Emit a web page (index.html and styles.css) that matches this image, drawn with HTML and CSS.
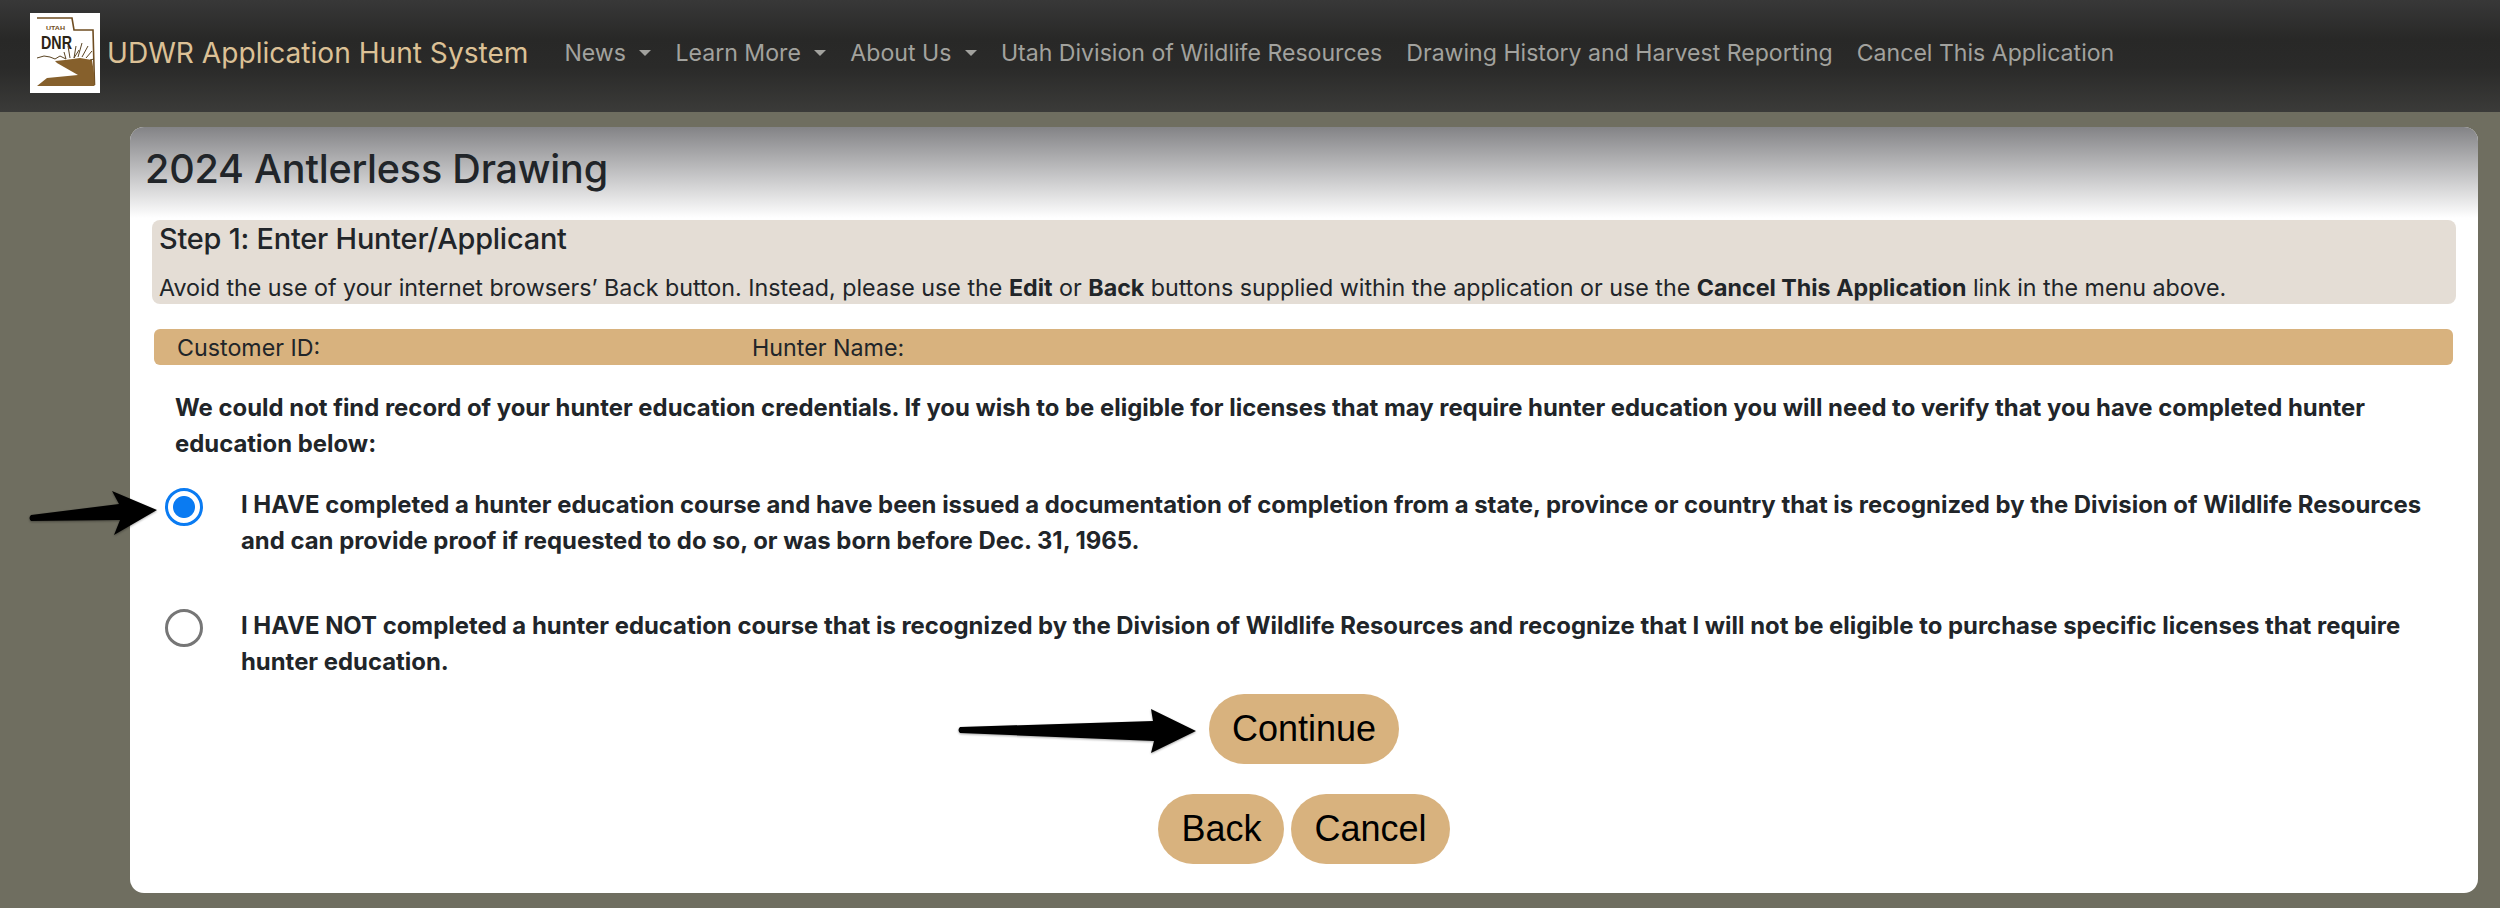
FILE: index.html
```html
<!DOCTYPE html>
<html lang="en">
<head>
<meta charset="utf-8">
<title>UDWR Application Hunt System</title>
<link rel="stylesheet" href="styles.css">
</head>
<body>
<nav class="navbar">
  <a class="logo" href="#">
    <svg viewBox="0 0 70 80" width="70" height="80" aria-hidden="true">
      <rect width="70" height="80" fill="#fff"/>
      <path d="M7 5H42L44 17H63L64.500 72" fill="none" stroke="#6f4d22" stroke-width="1.6"/>
      <path d="M7 73L17 65L48 62L27 50L25 48L35 47L50 45L62 47L64 60L64.500 73Z" fill="#86602c"/>
      <path d="M7 45L14 43L20 44L25 46L30 43L36 46M36 46L34 39M40 45L38 33M44 45L46 33M48 44L52 30M52 44L58 33M56 45L62 38M60 47L64 46M44 45L49 37" fill="none" stroke="#5a4423" stroke-width="1"/>
      <text class="logo-utah" x="16" y="17" textLength="19" lengthAdjust="spacingAndGlyphs">UTAH</text>
      <text class="logo-dnr" x="11" y="36" textLength="31" lengthAdjust="spacingAndGlyphs">DNR</text>
    </svg>
  </a>
  <a class="brand" href="#">UDWR Application Hunt System</a>
  <ul class="menu">
    <li class="dropdown">News</li>
    <li class="dropdown">Learn More</li>
    <li class="dropdown">About Us</li>
    <li>Utah Division of Wildlife Resources</li>
    <li>Drawing History and Harvest Reporting</li>
    <li>Cancel This Application</li>
  </ul>
</nav>
<main class="page">
  <section class="card">
    <header class="card-head"><h1>2024 Antlerless Drawing</h1></header>
    <div class="step">
      <h2>Step 1: Enter Hunter/Applicant</h2>
      <p>Avoid the use of your internet browsers’ Back button. Instead, please use the <b>Edit</b> or <b>Back</b> buttons supplied within the application or use the <b>Cancel This Application</b> link in the menu above.</p>
    </div>
    <div class="customer">
      <span class="cust-id">Customer ID:</span>
      <span>Hunter Name:</span>
    </div>
    <p class="notice">We could not find record of your hunter education credentials. If you wish to be eligible for licenses that may require hunter education you will need to verify that you have completed hunter education below:</p>
    <div class="option">
      <span class="radio checked"></span>
      <p>I HAVE completed a hunter education course and have been issued a documentation of completion from a state, province or country that is recognized by the Division of Wildlife Resources and can provide proof if requested to do so, or was born before Dec. 31, 1965.</p>
    </div>
    <div class="option">
      <span class="radio"></span>
      <p>I HAVE NOT completed a hunter education course that is recognized by the Division of Wildlife Resources and recognize that I will not be eligible to purchase specific licenses that require hunter education.</p>
    </div>
    <div class="actions"><button class="btn">Continue</button></div>
    <div class="actions second"><button class="btn">Back</button><button class="btn">Cancel</button></div>
  </section>
</main>
<svg class="arrows" width="2500" height="908" viewBox="0 0 2500 908" aria-hidden="true">
  <path d="M31 515L119 504L112 491L157 510L114 535L120 520L31 521Q28 518 31 515Z"/>
  <path d="M960 727L1153 721L1151 709L1196 731L1151 753L1154 741L960 733Q957 730 960 727Z"/>
</svg>
</body>
</html>
```
FILE: styles.css
```css
* { box-sizing: border-box; }
html, body { margin: 0; padding: 0; }
body {
  position: relative;
  height: 908px;
  overflow: hidden;
  background: #6f6e60;
  font-family: Inter, "Liberation Sans", sans-serif;
  color: #212529;
}
.navbar {
  display: flex;
  align-items: center;
  height: 112px;
  padding: 0 0 0 30px;
  background: linear-gradient(#383838 0, #282827 35%, #2a2a29 60%, #3b3b39 100%);
}
.logo { display: block; height: 80px; margin-top: -7px; }
.logo svg { display: block; }
.logo-utah { font: 700 6px "Liberation Sans", sans-serif; fill: #6f4d22; }
.logo-dnr { font: 700 18px "Liberation Sans", sans-serif; fill: #2c2416; }
.brand {
  margin: -6px 0 0 7px;
  color: #dcc196;
  font-size: 28.1px;
  text-decoration: none;
  white-space: nowrap;
}
.menu {
  display: flex;
  gap: 24px;
  margin: -6px 0 0 36px;
  padding: 0;
  list-style: none;
  color: #a2a29e;
  font-size: 23.1px;
  white-space: nowrap;
}
.dropdown { display: flex; align-items: center; }
.dropdown::after {
  content: "";
  margin-left: 13.5px;
  border-top: 6px solid currentColor;
  border-left: 6px solid transparent;
  border-right: 6px solid transparent;
}
.page { padding: 15px 22px 0 130px; }
.card {
  height: 766px;
  background: #fff;
  border-radius: 14px;
}
.card-head {
  height: 91px;
  padding: 14px 0 0 15px;
  border-radius: 14px 14px 0 0;
  background: linear-gradient(#838386 0, #fff 100%);
}
h1 { margin: 0; font-size: 39.5px; font-weight: 500; line-height: 56px; letter-spacing: -.2px; }
.step {
  height: 84px;
  margin: 2px 22px 0 22px;
  padding: 0 7px;
  background: #e4ddd5;
  border-radius: 8px;
}
h2 { margin: 0; font-size: 28.9px; font-weight: 500; line-height: 38px; letter-spacing: -.2px; }
.step p { margin: 14px 0 0; font-size: 23.25px; line-height: 32px; white-space: nowrap; }
.step b { font-weight: 700; }
.customer {
  display: flex;
  align-items: center;
  height: 36px;
  margin: 25px 25px 0 24px;
  padding-left: 23px;
  background: #d8b27e;
  border-radius: 6px;
  font-size: 23.25px;
}
.cust-id { width: 575px; }
.notice {
  margin: 25px 0 0 45px;
  width: 2285px;
  font-size: 23.9px;
  font-weight: 700;
  line-height: 36px;
}
.option {
  display: flex;
  margin: 25px 0 0 35px;
  height: 72px;
}
.option + .option { margin-top: 49px; }
.option p {
  margin: 0;
  padding-left: 38px;
  width: 2243px;
  font-size: 23.9px;
  font-weight: 700;
  line-height: 36px;
}
.radio {
  flex: none;
  width: 38px;
  height: 38px;
  margin-top: 1px;
  border: 3px solid #767676;
  border-radius: 50%;
  background: #fff;
}
.radio.checked {
  border-color: #0a7bf2;
  background: radial-gradient(circle, #0a7bf2 0 10.5px, #fff 11.5px);
}
.actions { display: flex; justify-content: center; gap: 7px; margin-top: 14px; }
.actions.second { margin-top: 30px; }
.btn {
  height: 70px;
  padding: 0 23px;
  border: 0;
  border-radius: 35px;
  background: #d8b27e;
  color: #000;
  font: 36px "Liberation Sans", Arial, sans-serif;
}
.arrows { position: absolute; left: 0; top: 0; pointer-events: none; filter: drop-shadow(0 1px 1px rgba(0, 0, 0, .35)); }
```
